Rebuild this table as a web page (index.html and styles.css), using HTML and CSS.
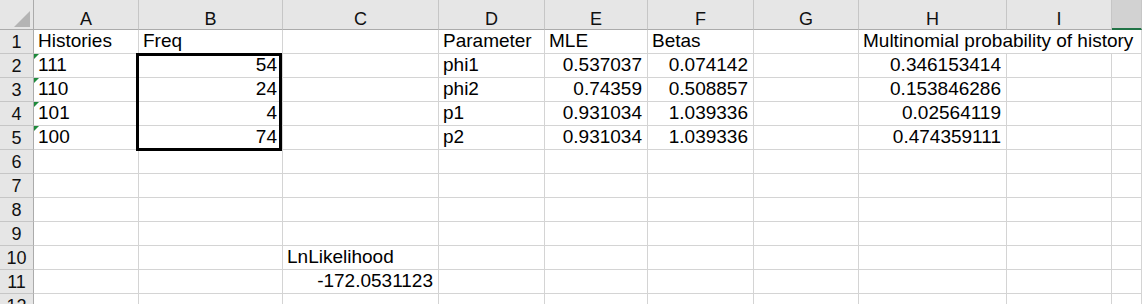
FILE: index.html
```html
<!DOCTYPE html>
<html>
<head>
<meta charset="utf-8">
<link rel="stylesheet" href="styles.css">
</head>
<body>
<div class="sheet">
  <div class="corner"><span class="tri"></span></div>
  <div class="colh">A</div><div class="colh">B</div><div class="colh">C</div><div class="colh">D</div><div class="colh">E</div><div class="colh">F</div><div class="colh">G</div><div class="colh">H</div><div class="colh">I</div><div class="colh sel"></div>

  <div class="rowh">1</div>
  <div class="c">Histories</div><div class="c">Freq</div><div class="c"></div><div class="c">Parameter</div><div class="c">MLE</div><div class="c">Betas</div><div class="c"></div><div class="c span3">Multinomial probability of history</div>

  <div class="rowh">2</div>
  <div class="c txt">111</div><div class="c n b2">54</div><div class="c"></div><div class="c">phi1</div><div class="c n">0.537037</div><div class="c n">0.074142</div><div class="c"></div><div class="c n">0.346153414</div><div class="c"></div><div class="c"></div>

  <div class="rowh">3</div>
  <div class="c txt">110</div><div class="c n b3">24</div><div class="c"></div><div class="c">phi2</div><div class="c n">0.74359</div><div class="c n">0.508857</div><div class="c"></div><div class="c n">0.153846286</div><div class="c"></div><div class="c"></div>

  <div class="rowh">4</div>
  <div class="c txt">101</div><div class="c n b4">4</div><div class="c"></div><div class="c">p1</div><div class="c n">0.931034</div><div class="c n">1.039336</div><div class="c"></div><div class="c n">0.02564119</div><div class="c"></div><div class="c"></div>

  <div class="rowh">5</div>
  <div class="c txt">100</div><div class="c n b5">74</div><div class="c"></div><div class="c">p2</div><div class="c n">0.931034</div><div class="c n">1.039336</div><div class="c"></div><div class="c n">0.474359111</div><div class="c"></div><div class="c"></div>

  <div class="rowh">6</div>
  <div class="c"></div><div class="c"></div><div class="c"></div><div class="c"></div><div class="c"></div><div class="c"></div><div class="c"></div><div class="c"></div><div class="c"></div><div class="c"></div>

  <div class="rowh">7</div>
  <div class="c"></div><div class="c"></div><div class="c"></div><div class="c"></div><div class="c"></div><div class="c"></div><div class="c"></div><div class="c"></div><div class="c"></div><div class="c"></div>

  <div class="rowh">8</div>
  <div class="c"></div><div class="c"></div><div class="c"></div><div class="c"></div><div class="c"></div><div class="c"></div><div class="c"></div><div class="c"></div><div class="c"></div><div class="c"></div>

  <div class="rowh">9</div>
  <div class="c"></div><div class="c"></div><div class="c"></div><div class="c"></div><div class="c"></div><div class="c"></div><div class="c"></div><div class="c"></div><div class="c"></div><div class="c"></div>

  <div class="rowh">10</div>
  <div class="c"></div><div class="c"></div><div class="c">LnLikelihood</div><div class="c"></div><div class="c"></div><div class="c"></div><div class="c"></div><div class="c"></div><div class="c"></div><div class="c"></div>

  <div class="rowh">11</div>
  <div class="c"></div><div class="c"></div><div class="c n">-172.0531123</div><div class="c"></div><div class="c"></div><div class="c"></div><div class="c"></div><div class="c"></div><div class="c"></div><div class="c"></div>

  <div class="rowh">12</div>
  <div class="c"></div><div class="c"></div><div class="c"></div><div class="c"></div><div class="c"></div><div class="c"></div><div class="c"></div><div class="c"></div><div class="c"></div><div class="c"></div>

  <div class="selection"></div>
</div>
</body>
</html>
```
FILE: styles.css
```css
html, body {
  margin: 0;
  padding: 0;
  background: #ffffff;
  overflow: hidden;
}

.sheet {
  display: grid;
  grid-template-columns: 34px 105px 144px 156px 106px 103px 106px 105px 148px 105px 30px;
  grid-template-rows: 30px repeat(12, 24px);
  width: 1142px;
  height: 304px;
  overflow: hidden;
  font-family: "Liberation Sans", Arial, sans-serif;
  color: #000;
}

.corner {
  background: #e6e6e6;
  border-right: 1px solid #ababab;
  border-bottom: 1px solid #ababab;
  box-sizing: border-box;
  display: flex;
  align-items: flex-end;
  justify-content: flex-end;
  padding: 0 3px 2px 0;
}

.tri {
  width: 0;
  height: 0;
  border-left: 16px solid transparent;
  border-bottom: 16px solid #b4b4b4;
}

.colh {
  background: #e6e6e6;
  border-right: 1px solid #c6c6c6;
  border-bottom: 1px solid #ababab;
  box-sizing: border-box;
  display: flex;
  align-items: center;
  justify-content: center;
  font-size: 18px;
  color: #111;
  padding-top: 10px;
}

.colh.sel {
  background: #d2d2d2;
  border-bottom: 2px solid #217346;
}

.rowh {
  background: #e6e6e6;
  border-right: 1px solid #ababab;
  border-bottom: 1px solid #c6c6c6;
  box-sizing: border-box;
  display: flex;
  align-items: center;
  justify-content: center;
  font-size: 18px;
  color: #111;
  padding-top: 2px;
}

.c {
  position: relative;
  border-right: 1px solid #d4d4d4;
  border-bottom: 1px solid #d4d4d4;
  box-sizing: border-box;
  display: flex;
  align-items: flex-end;
  padding: 0 5px 1px 4px;
  font-size: 19px;
  line-height: 22px;
  white-space: nowrap;
}

.c.n {
  justify-content: flex-end;
}

.c.span3 {
  grid-column: span 3;
  overflow: visible;
}

.c.b2 { grid-column: 3; grid-row: 3; }
.c.b3 { grid-column: 3; grid-row: 4; }
.c.b4 { grid-column: 3; grid-row: 5; }
.c.b5 { grid-column: 3; grid-row: 6; }

.c.txt::before {
  content: "";
  position: absolute;
  left: 0;
  top: 0;
  width: 0;
  height: 0;
  border-top: 5px solid #1e8a3c;
  border-right: 5px solid transparent;
}

.selection {
  grid-column: 3;
  grid-row: 3 / 7;
  margin: -1px 1px -1px -3px;
  border: 3px solid #000;
  pointer-events: none;
  z-index: 2;
}
```
